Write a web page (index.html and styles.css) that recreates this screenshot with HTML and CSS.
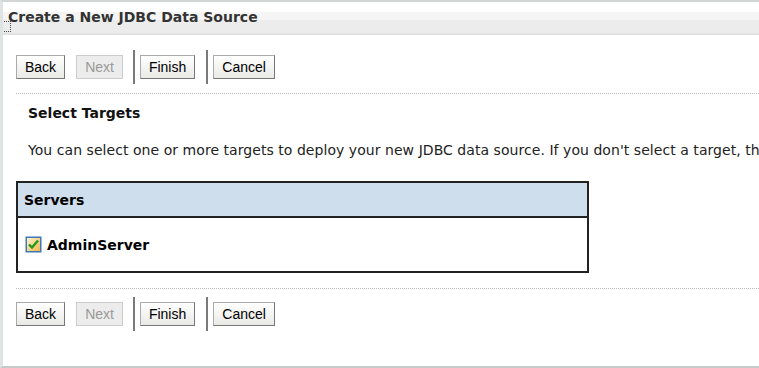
FILE: index.html
```html
<!DOCTYPE html>
<html lang="en">
<head>
    <meta charset="UTF-8">
    <meta name="viewport" content="width=device-width, initial-scale=1.0">
    <link rel="stylesheet" href="styles.css">
    <title>Create a New JDBC Data Source</title>
</head>
<body>
    <div class="frame">
        <div class="title-bar">
            <span class="focus-mark"></span>
            <h1>Create a New JDBC Data Source</h1>
        </div>
        <div class="content">
            <div class="btn-row">
                <button class="btn">Back</button>
                <button class="btn" disabled>Next</button>
                <span class="sep"></span>
                <button class="btn">Finish</button>
                <span class="sep"></span>
                <button class="btn">Cancel</button>
            </div>
            <div class="dots"></div>

            <h2>Select Targets</h2>
            <p class="intro">You can select one or more targets to deploy your new JDBC data source. If you don't select a target, the data source will be created but not deployed.</p>

            <table class="servers">
                <tr><th>Servers</th></tr>
                <tr>
                    <td>
                        <label class="server">
                            <svg class="check" width="17" height="17" viewBox="0 0 17 17">
                                <defs>
                                    <linearGradient id="boxfill" x1="0" y1="0" x2="1" y2="1">
                                        <stop offset="0" stop-color="#fff3d0"/>
                                        <stop offset="1" stop-color="#f2b64a"/>
                                    </linearGradient>
                                </defs>
                                <rect x="0.5" y="0.5" width="16" height="16" fill="#3f79b8"/>
                                <rect x="2" y="2" width="13" height="13" fill="url(#boxfill)"/>
                                <path d="M4 8.5 L7 11.5 L13 4.5" fill="none" stroke="#1f9a1f" stroke-width="2.4"/>
                            </svg>
                            AdminServer
                        </label>
                    </td>
                </tr>
            </table>

            <div class="dots"></div>
            <div class="btn-row bottom">
                <button class="btn">Back</button>
                <button class="btn" disabled>Next</button>
                <span class="sep"></span>
                <button class="btn">Finish</button>
                <span class="sep"></span>
                <button class="btn">Cancel</button>
            </div>
        </div>
    </div>
</body>
</html>
```

FILE: styles.css
```css
body {
    font-family: "DejaVu Sans", Verdana, sans-serif;
    background-color: #fff;
    color: #000;
    margin: 0;
    padding: 0;
    overflow: hidden;
}

.frame {
    height: 368px;
    border-top: 2px solid #d2d6d6;
    border-left: 3px solid #dfe3e3;
    border-bottom: 2px solid #c6c9c9;
    box-sizing: border-box;
    overflow: hidden;
}

.title-bar {
    position: relative;
    height: 31px;
    background: linear-gradient(#fff 0, #fff 10px, #f5f5f5 10px, #f5f5f5 18px, #ececec 18px);
    border-bottom: 2px solid #e2e2e2;
}

.focus-mark {
    position: absolute;
    left: -3px;
    top: 19px;
    width: 9px;
    height: 9px;
    border: 1px dotted #444;
}

h1 {
    margin: 0;
    padding: 7px 0 0 5px;
    font-size: 14px;
    font-weight: bold;
    color: #333;
}

.content {
    padding-left: 13px;
}

.btn-row {
    display: flex;
    align-items: center;
    height: 34px;
    margin-top: 15px;
}

.btn-row.bottom {
    margin-top: 8px;
}

.btn {
    font-family: "Liberation Sans", Arial, sans-serif;
    font-size: 14px;
    height: 24px;
    padding: 0 8px;
    margin-right: 11px;
    color: #000;
    background: linear-gradient(#fff, #e9e9e6);
    border: 1px solid #aaa;
    border-right-color: #777;
    border-bottom-color: #777;
    border-radius: 0;
}

.btn:disabled {
    color: #999;
    background: #ececec;
    border-color: #ccc;
}

.btn:disabled + .sep {
    margin-left: -1px;
}

.sep {
    width: 2px;
    height: 34px;
    background-color: #7a7a7a;
    margin-right: 5px;
}

.dots {
    border-top: 1px dotted #bbb;
    margin-top: 9px;
}

h2 {
    margin: 11px 0 0 12px;
    font-size: 14px;
    font-weight: bold;
    color: #111;
}

.intro {
    margin: 21px 0 0 12px;
    font-size: 14px;
    letter-spacing: 0.05px;
    color: #222;
    white-space: nowrap;
}

.servers {
    width: 573px;
    margin-top: 23px;
    border: 2px solid #222;
    border-collapse: collapse;
}

.servers th {
    text-align: left;
    background-color: #cfdeed;
    font-size: 14px;
    height: 33px;
    padding: 0 0 0 6px;
    border-bottom: 2px solid #222;
}

.servers td {
    height: 53px;
    padding: 0 0 0 7px;
}

.server {
    display: flex;
    align-items: center;
    gap: 5px;
    font-weight: bold;
    font-size: 14px;
}

.servers + .dots {
    margin-top: 15px;
}
```
